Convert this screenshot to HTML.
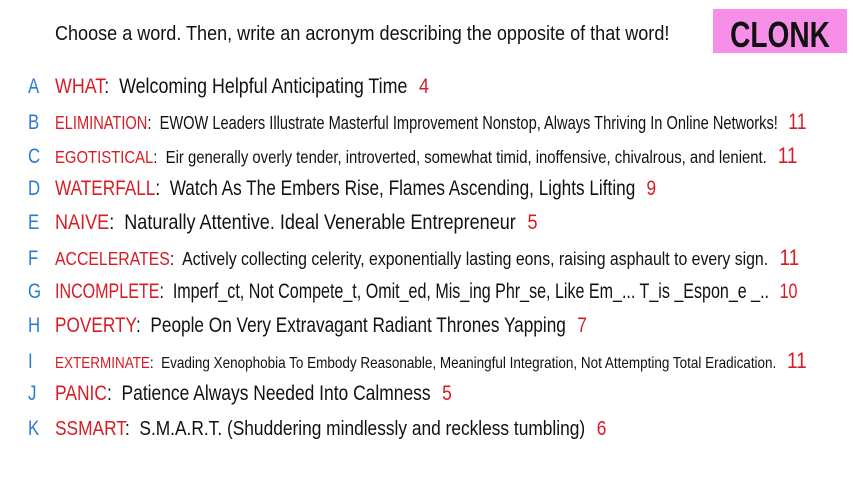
<!DOCTYPE html>
<html><head><meta charset="utf-8"><style>
body{margin:0;width:853px;height:480px;background:#fff;overflow:hidden;position:relative;font-family:"Liberation Sans",sans-serif;color:#111}
.l{position:absolute;left:28px;white-space:nowrap;line-height:1}
.k{display:inline-block;width:27px;color:#2a7bd4;font-size:21px;transform:scaleX(0.8);transform-origin:left}
.t{display:inline-block;transform-origin:left center}
.w{color:#d81b25}
.n{color:#d81b25;margin-left:8px}
.box{position:absolute;left:713px;top:9px;width:134px;height:44px;background:#f78fe8}
.box span{position:absolute;left:0;right:0;top:5px;text-align:center;font-size:36px;font-weight:bold;transform:scaleX(0.78);color:#111}
</style></head><body>
<div class="l" style="top:24px;left:55px;font-size:20.5px"><span class="t" style="transform:scaleX(0.88)">Choose a word. Then, write an acronym describing the opposite of that word!</span></div>
<div class="box"><span>CLONK</span></div>

<div class="l" style="top:76px;font-size:21.5px"><span class="k">A</span><span class="t" style="transform:scaleX(0.83)"><span class="w">WHAT</span>:&nbsp; Welcoming Helpful Anticipating Time <span class="n">4</span></span></div>
<div class="l" style="top:111px;font-size:18.3px"><span class="k">B</span><span class="t" style="transform:scaleX(0.8)"><span class="w">ELIMINATION</span>:&nbsp; EWOW Leaders Illustrate Masterful Improvement Nonstop, Always Thriving In Online Networks! <span class="n" style="font-size:22px">11</span></span></div>
<div class="l" style="top:145px;font-size:17.3px"><span class="k">C</span><span class="t" style="transform:scaleX(0.86)"><span class="w">EGOTISTICAL</span>:&nbsp; Eir generally overly tender, introverted, somewhat timid, inoffensive, chivalrous, and lenient. <span class="n" style="font-size:22px">11</span></span></div>
<div class="l" style="top:178px;font-size:21.5px"><span class="k">D</span><span class="t" style="transform:scaleX(0.8)"><span class="w">WATERFALL</span>:&nbsp; Watch As The Embers Rise, Flames Ascending, Lights Lifting <span class="n">9</span></span></div>
<div class="l" style="top:212px;font-size:21.5px"><span class="k">E</span><span class="t" style="transform:scaleX(0.84)"><span class="w">NAIVE</span>:&nbsp; Naturally Attentive. Ideal Venerable Entrepreneur <span class="n">5</span></span></div>
<div class="l" style="top:247px;font-size:18.3px"><span class="k">F</span><span class="t" style="transform:scaleX(0.865)"><span class="w">ACCELERATES</span>:&nbsp; Actively collecting celerity, exponentially lasting eons, raising asphault to every sign. <span class="n" style="font-size:22px">11</span></span></div>
<div class="l" style="top:281px;font-size:21px"><span class="k">G</span><span class="t" style="transform:scaleX(0.765)"><span class="w">INCOMPLETE</span>:&nbsp; Imperf_ct, Not Compete_t, Omit_ed, Mis_ing Phr_se, Like Em_... T_is _Espon_e _.. <span class="n">10</span></span></div>
<div class="l" style="top:315px;font-size:21px"><span class="k">H</span><span class="t" style="transform:scaleX(0.82)"><span class="w">POVERTY</span>:&nbsp; People On Very Extravagant Radiant Thrones Yapping <span class="n">7</span></span></div>
<div class="l" style="top:350px;font-size:15.6px"><span class="k">I</span><span class="t" style="transform:scaleX(0.865)"><span class="w">EXTERMINATE</span>:&nbsp; Evading Xenophobia To Embody Reasonable, Meaningful Integration, Not Attempting Total Eradication. <span class="n" style="font-size:22px">11</span></span></div>
<div class="l" style="top:383px;font-size:21px"><span class="k">J</span><span class="t" style="transform:scaleX(0.83)"><span class="w">PANIC</span>:&nbsp; Patience Always Needed Into Calmness <span class="n">5</span></span></div>
<div class="l" style="top:418px;font-size:20.5px"><span class="k">K</span><span class="t" style="transform:scaleX(0.845)"><span class="w">SSMART</span>:&nbsp; S.M.A.R.T. (Shuddering mindlessly and reckless tumbling) <span class="n">6</span></span></div>
</body></html>
